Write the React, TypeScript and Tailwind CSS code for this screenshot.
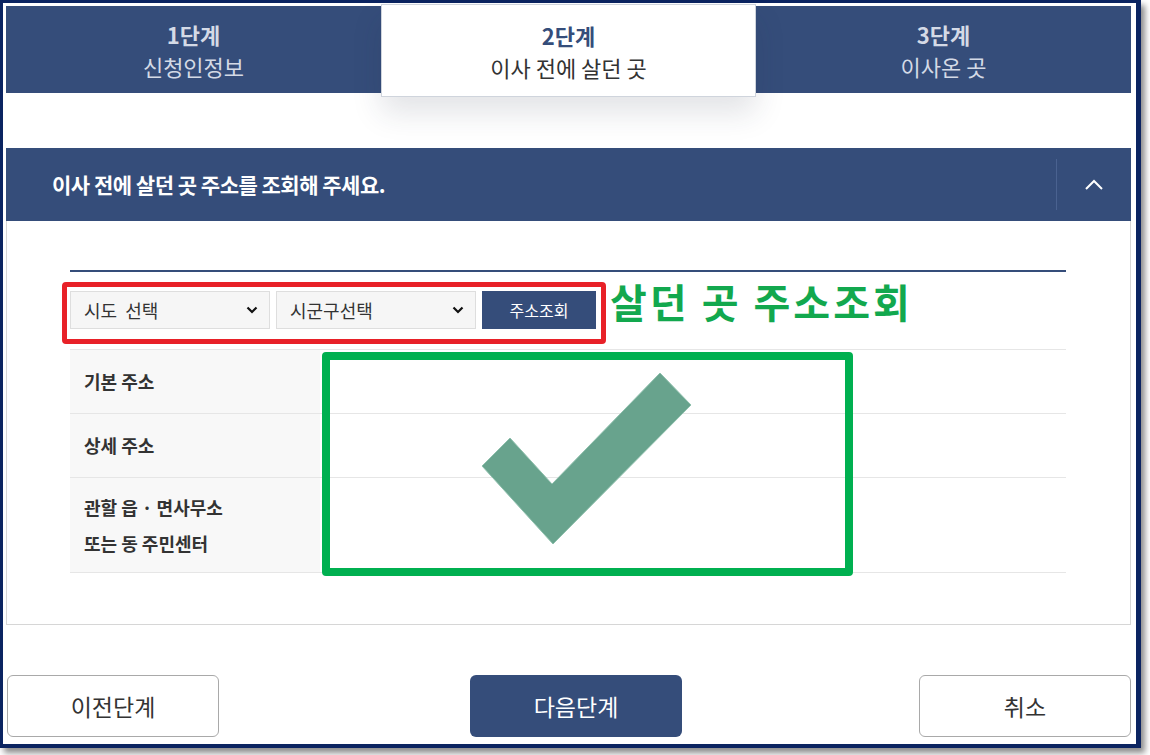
import React from "react";

const NAVY = "bg-[#354d7a]";

function Chevron({ className = "" }: { className?: string }) {
  return (
    <svg width="12" height="8" viewBox="0 0 12 8" className={className}>
      <path d="M1.5 1.5 L6 6 L10.5 1.5" fill="none" stroke="#111" strokeWidth="2.2" />
    </svg>
  );
}

export default function App() {
  return (
    <div
      className="w-[1150px] h-[755px] bg-white relative overflow-hidden"
      style={{ fontFamily: '"Noto Sans CJK KR", "Noto Sans", sans-serif' }}
    >
      <div className="w-[1141px] h-[748px] border-l-[3px] border-t-[3px] border-r-[5px] border-b-[4px] border-[#0b2461] shadow-[4px_5px_6px_rgba(0,0,0,0.45)] bg-white pl-[3px] pr-[5px] pt-[3px] flex flex-col">
        {/* Tabs */}
        <div className="flex h-[87px] items-start">
          <div className={`w-[375px] h-[87px] ${NAVY} flex flex-col items-center justify-center text-[#d4dae6] leading-[32px]`}>
            <div className="text-[22px] font-bold">1단계</div>
            <div className="text-[22px]">신청인정보</div>
          </div>
          <div className="w-[375px] h-[93px] -mt-[2px] bg-white border border-[#cfd4dc] relative z-10 flex flex-col items-center justify-center leading-[32px] shadow-[0_16px_28px_rgba(40,50,70,0.13)]">
            <div className="text-[22px] font-bold text-[#354d7a]">2단계</div>
            <div className="text-[22px] text-[#333]">이사 전에 살던 곳</div>
          </div>
          <div className={`w-[375px] h-[87px] ${NAVY} flex flex-col items-center justify-center text-[#d4dae6] leading-[32px]`}>
            <div className="text-[22px] font-bold">3단계</div>
            <div className="text-[22px]">이사온 곳</div>
          </div>
        </div>

        {/* Section header */}
        <div className={`mt-[55px] h-[73px] ${NAVY} flex items-center`}>
          <div className="flex-1 pl-[46px] text-white font-bold text-[21px] tracking-[-0.5px]">
            이사 전에 살던 곳 주소를 조회해 주세요.
          </div>
          <div className="w-px h-[51px] bg-[#4a6290]" />
          <div className="w-[74px] flex items-center justify-center">
            <svg width="20" height="12" viewBox="0 0 20 12">
              <path d="M2 10 L10 2 L18 10" fill="none" stroke="#fff" strokeWidth="2" />
            </svg>
          </div>
        </div>

        {/* Panel */}
        <div className="h-[404px] border-l border-r border-b border-[#d6d6d6] pl-[63px] pr-[64px] pt-[49px]">
          <div className="h-[2px] bg-[#354d7a]" />
          <div className="relative mt-[19px] flex gap-[6px] h-[38px]">
            <div className="w-[200px] h-[38px] bg-[#f6f6f6] border border-[#dedede] flex items-center justify-between pl-[13px] pr-[11px] text-[18px] text-[#333]">
              <span className="[word-spacing:4px]">시도 선택</span>
              <Chevron />
            </div>
            <div className="w-[200px] h-[38px] bg-[#f6f6f6] border border-[#dedede] flex items-center justify-between pl-[13px] pr-[11px] text-[18px] text-[#333]">
              <span>시군구선택</span>
              <Chevron />
            </div>
            <div className={`w-[114px] h-[38px] ${NAVY} text-white text-[16px] flex items-center justify-center`}>
              주소조회
            </div>
            {/* red annotation */}
            <div className="absolute -left-[8px] -top-[9px] w-[544px] h-[62px] border-[5px] border-[#e82128] rounded-[4px]" />
            {/* green annotation text */}
            <div className="absolute left-[540px] top-[-20px] text-[40px] font-bold text-[#12a84e] tracking-[3px] leading-[60px] whitespace-nowrap">
              살던 곳 주소조회
            </div>
          </div>

          {/* Table */}
          <div className="relative mt-[20px] border-t border-[#e6e6e6]">
            <div className="flex h-[64px] border-b border-[#e6e6e6]">
              <div className="w-[250px] bg-[#f8f8f8] flex items-center pl-[14px] text-[18px] font-bold text-[#333]">기본 주소</div>
              <div className="flex-1" />
            </div>
            <div className="flex h-[64px] border-b border-[#e6e6e6]">
              <div className="w-[250px] bg-[#f8f8f8] flex items-center pl-[14px] text-[18px] font-bold text-[#333]">상세 주소</div>
              <div className="flex-1" />
            </div>
            <div className="flex h-[95px] border-b border-[#e6e6e6]">
              <div className="w-[250px] bg-[#f8f8f8] flex flex-col justify-center pl-[14px] text-[18px] font-bold text-[#333] leading-[36px]">
                <div>관할 읍 · 면사무소</div>
                <div>또는 동 주민센터</div>
              </div>
              <div className="flex-1" />
            </div>
            {/* green annotation box */}
            <div className="absolute left-[252px] top-[2px] w-[531px] h-[224px] border-[8px] border-[#00b050] rounded-[4px]" />
            <svg
              className="absolute left-[400px] top-[11px]"
              width="230"
              height="190"
              viewBox="470 360 230 190"
            >
              <polygon
                points="482,465 510,437 552,483 660,372 691,404 553,543"
                fill="#68a38d"
                stroke="#8fc0ad"
                strokeWidth="1"
              />
            </svg>
          </div>
        </div>

        {/* Buttons */}
        <div className="mt-[50px] flex items-center">
          <div className="ml-[1px] w-[212px] h-[62px] border border-[#a9a9a9] rounded-[6px] flex items-center justify-center text-[23px] text-[#333]">
            이전단계
          </div>
          <div className={`ml-[251px] w-[212px] h-[62px] ${NAVY} rounded-[6px] flex items-center justify-center text-[23px] text-white`}>
            다음단계
          </div>
          <div className="ml-auto w-[212px] h-[62px] border border-[#a9a9a9] rounded-[6px] flex items-center justify-center text-[23px] text-[#333]">
            취소
          </div>
        </div>
      </div>
    </div>
  );
}
